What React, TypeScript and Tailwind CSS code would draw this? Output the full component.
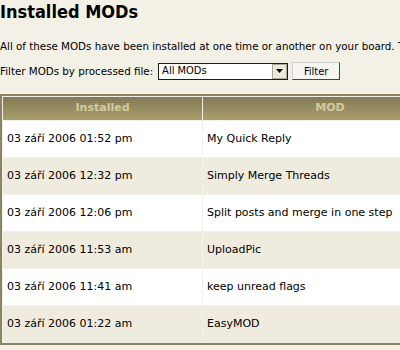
import React from "react";

const rows = [
  ["03 září 2006 01:52 pm", "My Quick Reply"],
  ["03 září 2006 12:32 pm", "Simply Merge Threads"],
  ["03 září 2006 12:06 pm", "Split posts and merge in one step"],
  ["03 září 2006 11:53 am", "UploadPic"],
  ["03 září 2006 11:41 am", "keep unread flags"],
  ["03 září 2006 01:22 am", "EasyMOD"],
];

export default function App() {
  return (
    <div className="w-[400px] h-[350px] overflow-hidden bg-[#f3f0e6] text-black font-['DejaVu_Sans',sans-serif]">
      <div className="w-[600px]">
        <h1 className="font-['DejaVu_Sans_Condensed','DejaVu_Sans',sans-serif] font-bold text-[18px] leading-[22px] pt-[1px] m-0">
          Installed MODs
        </h1>
        <p className="text-[10.3px] leading-[13px] mt-[17px] whitespace-nowrap">
          All of these MODs have been installed at one time or another on your board. This list
        </p>
        <div className="flex items-center mt-[9px] h-[18px]">
          <span className="text-[10.3px] leading-[13px] whitespace-nowrap">Filter MODs by processed file:</span>
          <div className="ml-[5px] w-[130px] h-[17px] border border-[#1c1c1c] bg-white flex items-center">
            <span className="flex-1 pl-[3px] text-[11px] font-['DejaVu_Sans_Condensed','DejaVu_Sans',sans-serif]">All MODs</span>
            <div className="w-[15px] h-[15px] bg-[#ece9d8] border border-[#aca899] flex items-center justify-center">
              <svg width="7" height="4" viewBox="0 0 7 4"><path d="M0 0h7L3.5 4z" fill="#000" /></svg>
            </div>
          </div>
          <button className="ml-[4px] w-[48px] h-[18px] bg-[#f5f5f2] border border-[#444] border-t-[#d0d0d0] border-l-[#d0d0d0] text-[11px] font-['DejaVu_Sans_Condensed','DejaVu_Sans',sans-serif] leading-none">
            Filter
          </button>
        </div>
        <table className="mt-[14px] w-[460px] border-2 border-[#8c8364] border-separate border-spacing-[1px] bg-[#f2efe6] text-[11px]">
          <thead>
            <tr>
              <th className="w-[199px] h-[23px] p-0 bg-gradient-to-b from-[#837956] to-[#aa9f6b] text-[#d4cb9c] font-bold text-center">Installed</th>
              <th className="h-[23px] p-0 bg-gradient-to-b from-[#837956] to-[#aa9f6b] text-[#d4cb9c] font-bold text-center">MOD</th>
            </tr>
          </thead>
          <tbody>
            {rows.map((r, i) => (
              <tr key={i} className={i % 2 === 0 ? "bg-white" : "bg-[#efebde]"}>
                <td className="h-[36px] pl-[4px] py-0 align-middle">{r[0]}</td>
                <td className="h-[36px] pl-[4px] py-0 align-middle">{r[1]}</td>
              </tr>
            ))}
          </tbody>
        </table>
      </div>
    </div>
  );
}
